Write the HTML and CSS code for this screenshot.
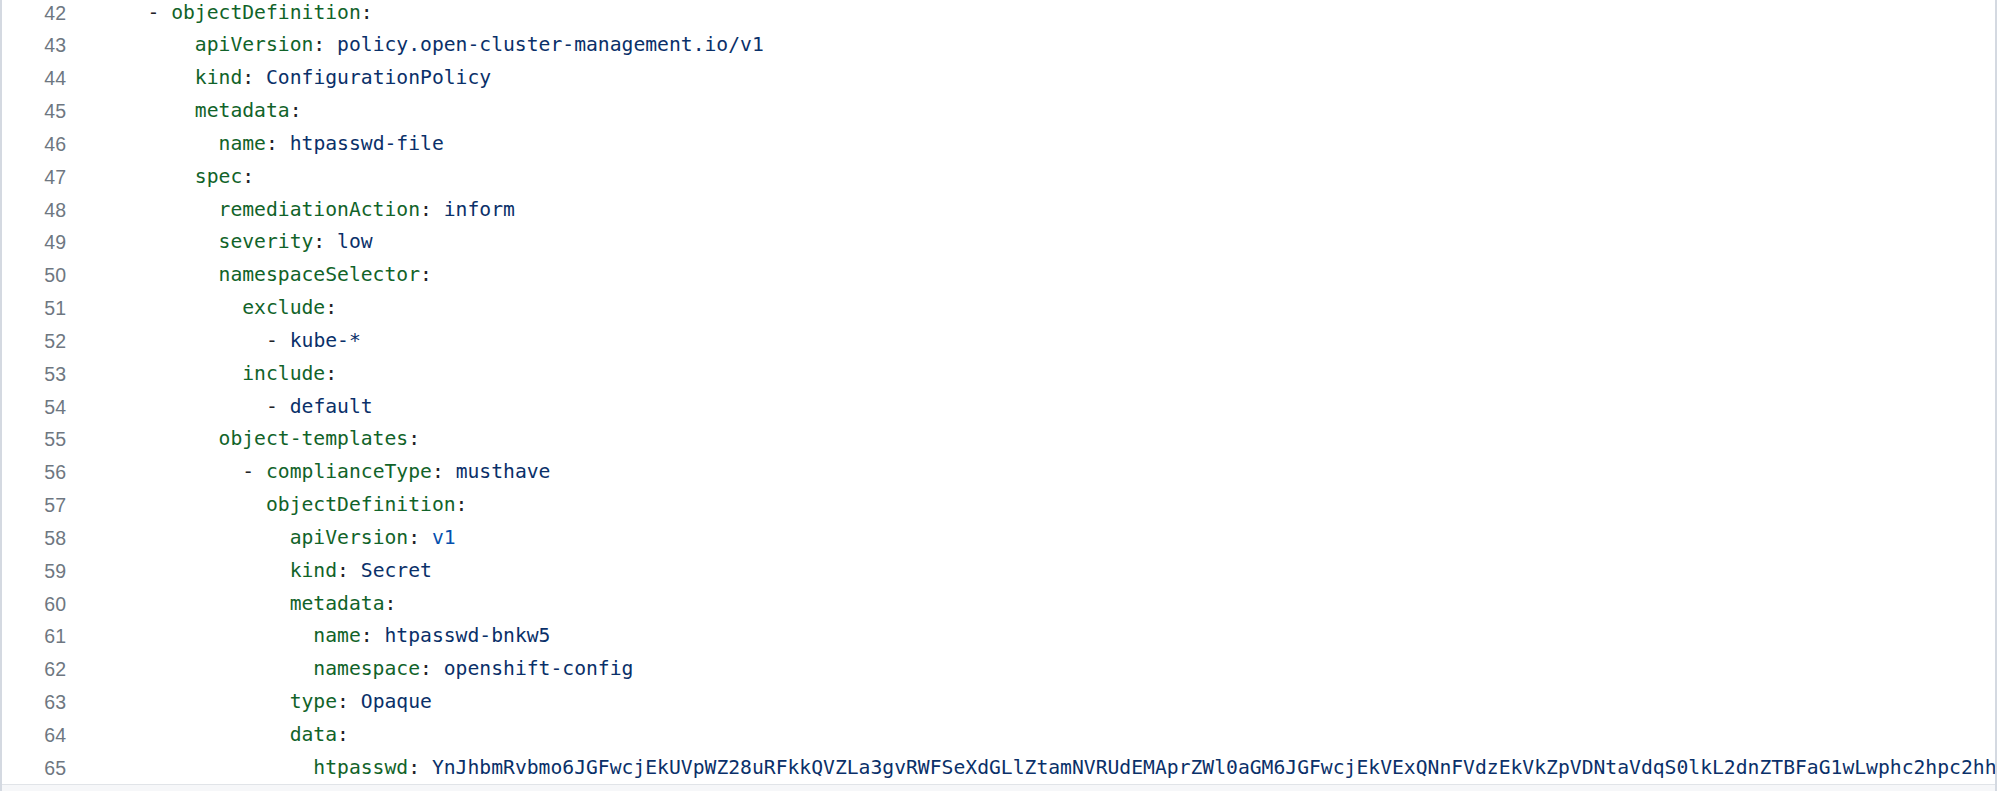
FILE: index.html
```html
<!DOCTYPE html>
<html lang="en">
<head>
<meta charset="utf-8">
<title>policy.yaml</title>
<link rel="stylesheet" href="styles.css">
</head>
<body>
<div class="frame">
  <div class="viewport">
    <div class="lines">
      <div class="row"><span class="ln">42</span><code class="src">    <span class="p">-</span> <span class="k">objectDefinition</span><span class="p">:</span></code></div>
      <div class="row"><span class="ln">43</span><code class="src">        <span class="k">apiVersion</span><span class="p">:</span> <span class="s">policy.open-cluster-management.io/v1</span></code></div>
      <div class="row"><span class="ln">44</span><code class="src">        <span class="k">kind</span><span class="p">:</span> <span class="s">ConfigurationPolicy</span></code></div>
      <div class="row"><span class="ln">45</span><code class="src">        <span class="k">metadata</span><span class="p">:</span></code></div>
      <div class="row"><span class="ln">46</span><code class="src">          <span class="k">name</span><span class="p">:</span> <span class="s">htpasswd-file</span></code></div>
      <div class="row"><span class="ln">47</span><code class="src">        <span class="k">spec</span><span class="p">:</span></code></div>
      <div class="row"><span class="ln">48</span><code class="src">          <span class="k">remediationAction</span><span class="p">:</span> <span class="s">inform</span></code></div>
      <div class="row"><span class="ln">49</span><code class="src">          <span class="k">severity</span><span class="p">:</span> <span class="s">low</span></code></div>
      <div class="row"><span class="ln">50</span><code class="src">          <span class="k">namespaceSelector</span><span class="p">:</span></code></div>
      <div class="row"><span class="ln">51</span><code class="src">            <span class="k">exclude</span><span class="p">:</span></code></div>
      <div class="row"><span class="ln">52</span><code class="src">              <span class="p">-</span> <span class="s">kube-*</span></code></div>
      <div class="row"><span class="ln">53</span><code class="src">            <span class="k">include</span><span class="p">:</span></code></div>
      <div class="row"><span class="ln">54</span><code class="src">              <span class="p">-</span> <span class="s">default</span></code></div>
      <div class="row"><span class="ln">55</span><code class="src">          <span class="k">object-templates</span><span class="p">:</span></code></div>
      <div class="row"><span class="ln">56</span><code class="src">            <span class="p">-</span> <span class="k">complianceType</span><span class="p">:</span> <span class="s">musthave</span></code></div>
      <div class="row"><span class="ln">57</span><code class="src">              <span class="k">objectDefinition</span><span class="p">:</span></code></div>
      <div class="row"><span class="ln">58</span><code class="src">                <span class="k">apiVersion</span><span class="p">:</span> <span class="c">v1</span></code></div>
      <div class="row"><span class="ln">59</span><code class="src">                <span class="k">kind</span><span class="p">:</span> <span class="s">Secret</span></code></div>
      <div class="row"><span class="ln">60</span><code class="src">                <span class="k">metadata</span><span class="p">:</span></code></div>
      <div class="row"><span class="ln">61</span><code class="src">                  <span class="k">name</span><span class="p">:</span> <span class="s">htpasswd-bnkw5</span></code></div>
      <div class="row"><span class="ln">62</span><code class="src">                  <span class="k">namespace</span><span class="p">:</span> <span class="s">openshift-config</span></code></div>
      <div class="row"><span class="ln">63</span><code class="src">                <span class="k">type</span><span class="p">:</span> <span class="s">Opaque</span></code></div>
      <div class="row"><span class="ln">64</span><code class="src">                <span class="k">data</span><span class="p">:</span></code></div>
      <div class="row"><span class="ln">65</span><code class="src">                  <span class="k">htpasswd</span><span class="p">:</span> <span class="s">YnJhbmRvbmo6JGFwcjEkUVpWZ28uRFkkQVZLa3gvRWFSeXdGLlZtamNVRUdEMAprZWl0aGM6JGFwcjEkVExQNnFVdzEkVkZpVDNtaVdqS0lkL2dnZTBFaG1wLwphc2hpc2hhOiRhcHIxJA==</span></code></div>
    </div>
  </div>
  <div class="hscroll"></div>
</div>
</body>
</html>
```
FILE: styles.css
```css
html, body {
  margin: 0;
  padding: 0;
  background: #ffffff;
}

.frame {
  width: 1997px;
  height: 791px;
  box-sizing: border-box;
  border-left: 2px solid #d4d9e1;
  border-right: 2px solid #d4d9e1;
  display: flex;
  flex-direction: column;
  overflow: hidden;
}

.viewport {
  height: 784px;
  flex: none;
  overflow: hidden;
  border-bottom: 1px solid #e1e4e8;
  background: #ffffff;
}

.lines {
  margin-top: -3.4px;
}

.row {
  display: flex;
  height: 32.83px;
  line-height: 32.83px;
  white-space: nowrap;
}

.ln {
  flex: none;
  width: 64px;
  text-align: right;
  font-family: "Liberation Sans", Arial, sans-serif;
  font-size: 19.5px;
  color: #6e7781;
}

.src {
  flex: none;
  margin-left: 34px;
  font-family: "DejaVu Sans Mono", monospace;
  font-size: 19.7px;
  white-space: pre;
  color: #1f2328;
}

.k { color: #116329; }
.s { color: #0a3069; }
.c { color: #0550ae; }
.p { color: #1f2328; }

.hscroll {
  flex: 1;
  background: #f6f7f9;
}
```
